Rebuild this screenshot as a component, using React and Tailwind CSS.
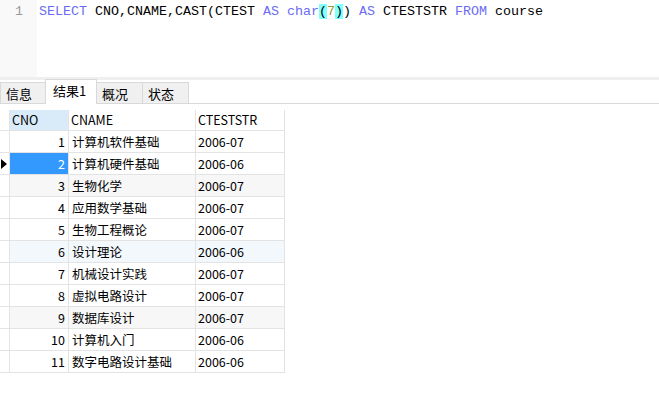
const rows = [
  ["1", "计算机软件基础", "2006-07"],
  ["2", "计算机硬件基础", "2006-06"],
  ["3", "生物化学", "2006-07"],
  ["4", "应用数学基础", "2006-07"],
  ["5", "生物工程概论", "2006-07"],
  ["6", "设计理论", "2006-06"],
  ["7", "机械设计实践", "2006-07"],
  ["8", "虚拟电路设计", "2006-07"],
  ["9", "数据库设计", "2006-07"],
  ["10", "计算机入门", "2006-06"],
  ["11", "数字电路设计基础", "2006-06"],
];

const tabs = ["信息", "结果1", "概况", "状态"];

function rowBg(i) {
  if (i === 2 || i === 8) return "bg-[#f7f7f7]";
  if (i === 5) return "bg-[#f3f8fd]";
  return "bg-white";
}

function Editor() {
  const kw = "text-[#6b6bf5]";
  return (
    <div className="flex h-[77px]">
      <div className="w-[37px] bg-[#f9f9f9] pl-[15px] pt-[4px] text-[13.33px] leading-[16px] text-[#999] font-['Liberation_Mono',monospace]">
        1
      </div>
      <div className="pl-[2px] pt-[4px] text-[13.33px] leading-[16px] text-black font-['Liberation_Mono',monospace] whitespace-pre">
        <span className={kw}>SELECT</span> CNO,CNAME,CAST(CTEST <span className={kw}>AS</span>{" "}
        <span className={kw}>char</span>
        <span className="bg-[#80ffff]">(</span>
        <span className="text-[#9a9a2a]">7</span>
        <span className="bg-[#80ffff]">)</span>) <span className={kw}>AS</span> CTESTSTR{" "}
        <span className={kw}>FROM</span> course
      </div>
    </div>
  );
}

function TabBar() {
  return (
    <div className="flex h-[24px] items-end border-b border-[#d9d9d9]">
      {tabs.map((t, i) =>
        i === 1 ? (
          <div
            key={t}
            className="relative -mb-px -ml-px flex h-[25px] w-[52px] items-center border border-b-0 border-[#d9d9d9] bg-white pl-[7px] pb-[3px] text-[13px]"
          >
            {t}
          </div>
        ) : (
          <div
            key={t}
            className={`flex h-[21px] items-center border border-b-0 border-[#d9d9d9] bg-[#f0f0f0] pl-[5px] pt-px text-[13px] ${i > 0 ? "-ml-px w-[47px]" : "w-[46px]"}`}
          >
            {t}
          </div>
        )
      )}
    </div>
  );
}

function Grid() {
  const cell = "border-r border-b border-[#e3e3e3] h-[22px] flex items-center pt-px";
  return (
    <div className="mt-[6px] w-[285px] text-[12.5px] text-black">
      <div className="flex">
        <div className="h-[21px] w-[10px] border-r border-b border-[#e3e3e3]" />
        <div className="flex h-[21px] w-[59px] items-center border-r border-b border-[#e3e3e3] bg-[#d9ebf9] pl-[2px] pt-px">CNO</div>
        <div className="flex h-[21px] w-[127px] items-center border-r border-b border-[#e3e3e3] pl-[2px] pt-px">CNAME</div>
        <div className="flex h-[21px] w-[89px] items-center border-r border-b border-[#e3e3e3] pl-[2px] pt-px">CTESTSTR</div>
      </div>
      {rows.map((r, i) => (
        <div key={r[0]} className={`flex ${rowBg(i)}`}>
          <div className={`${cell} w-[10px] bg-white`}>
            {i === 1 && (
              <svg width="6" height="10" viewBox="0 0 6 10" className="ml-[1px]">
                <path d="M0 0 L6 5 L0 10 Z" fill="#000" />
              </svg>
            )}
          </div>
          <div
            className={`${cell} w-[59px] justify-end pr-[3px] ${i === 1 ? "bg-[#3399ff] text-white" : ""}`}
          >
            {r[0]}
          </div>
          <div className={`${cell} w-[127px] pl-[3px]`}>{r[1]}</div>
          <div className={`${cell} w-[89px] pl-[2px]`}>{r[2]}</div>
        </div>
      ))}
    </div>
  );
}

export default function App() {
  return (
    <div className="h-[416px] w-[659px] overflow-hidden bg-white font-['Noto_Sans_CJK_SC',sans-serif]">
      <Editor />
      <div className="h-[3px] bg-[#efefef]" />
      <TabBar />
      <Grid />
    </div>
  );
}
